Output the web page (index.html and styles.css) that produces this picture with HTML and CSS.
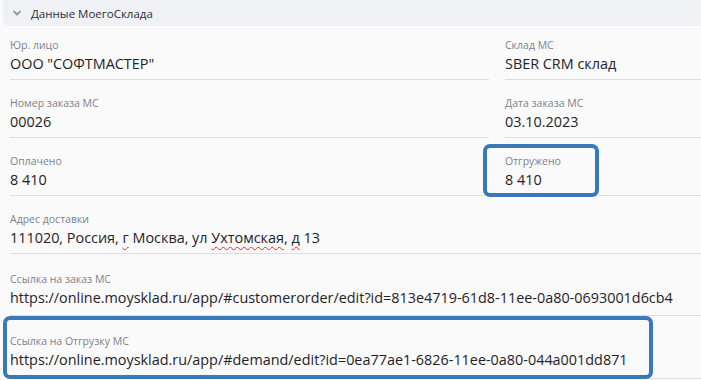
FILE: index.html
```html
<!DOCTYPE html>
<html lang="ru">
  <head>
    <meta charset="UTF-8">
    <title>Данные МоегоСклада</title>
    <link rel="stylesheet" href="styles.css">
  </head>
  <body>
    <div class="section">
      <div class="section-header">
        <svg class="chevron" width="10" height="6" viewBox="0 0 10 6">
          <path d="M1.5 1.2 L5 4.5 L8.5 1.2" fill="none" stroke="#8d929a" stroke-width="1.8"/>
        </svg>
        <span>Данные МоегоСклада</span>
      </div>

      <div class="fields">
        <div class="row first">
          <div class="field">
            <div class="label">Юр. лицо</div>
            <div class="value">ООО "СОФТМАСТЕР"</div>
          </div>
          <div class="field">
            <div class="label">Склад МС</div>
            <div class="value">SBER CRM склад</div>
          </div>
        </div>

        <div class="row">
          <div class="field">
            <div class="label">Номер заказа МС</div>
            <div class="value">00026</div>
          </div>
          <div class="field">
            <div class="label">Дата заказа МС</div>
            <div class="value">03.10.2023</div>
          </div>
        </div>

        <div class="row">
          <div class="field">
            <div class="label">Оплачено</div>
            <div class="value">8 410</div>
          </div>
          <div class="field marked-small">
            <div class="label">Отгружено</div>
            <div class="value">8 410</div>
          </div>
        </div>

        <div class="row wide">
          <div class="field">
            <div class="label">Адрес доставки</div>
            <div class="value">111020, Россия, <span class="typo">г</span> Москва, ул <span class="typo">Ухтомская</span>, <span class="typo">д</span> 13</div>
          </div>
        </div>

        <div class="row wide link">
          <div class="field">
            <div class="label">Ссылка на заказ МС</div>
            <div class="value">https://online.moysklad.ru/app/#customerorder/edit?id=813e4719-61d8-11ee-0a80-0693001d6cb4</div>
          </div>
        </div>

        <div class="row wide link last">
          <div class="field marked-wide">
            <div class="label">Ссылка на Отгрузку МС</div>
            <div class="value">https://online.moysklad.ru/app/#demand/edit?id=0ea77ae1-6826-11ee-0a80-044a001dd871</div>
          </div>
        </div>
      </div>
    </div>
  </body>
</html>
```

FILE: styles.css
```css
body {
  margin: 0;
  background: #fafafa;
  font-family: 'Open Sans', 'Noto Sans', sans-serif;
  color: #1f2328;
}
.section-header {
  display: flex;
  align-items: center;
  gap: 9px;
  height: 26px;
  margin-left: 3px;
  padding-left: 9px;
  background: #eff1f4;
  border-radius: 0 0 0 6px;
  font-size: 11.5px;
  color: #2b2f36;
}
.fields {
  padding-left: 10px;
}
.row {
  display: grid;
  grid-template-columns: 479px 1fr;
  column-gap: 16px;
}
.row.wide {
  grid-template-columns: 1fr;
}
.field {
  position: relative;
  padding: 16px 0 5px;
  border-bottom: 1px solid #dedede;
}
.row.first .field {
  padding-top: 12px;
}
.row.link .field {
  padding-top: 18px;
  padding-bottom: 7px;
}
.row.last .field {
  padding-bottom: 8px;
}
.label {
  font-size: 10.5px;
  line-height: 14px;
  color: #7d828a;
}
.value {
  margin-top: 2px;
  font-size: 14.4px;
  line-height: 20px;
  white-space: nowrap;
}
.typo {
  text-decoration: underline wavy #e0312b;
  text-decoration-thickness: 1px;
  text-underline-offset: 3px;
}
/* blue annotation frames drawn over the fields */
.marked-small::after,
.marked-wide::after {
  content: '';
  position: absolute;
  border: 4px solid #3a78bc;
  border-radius: 7px;
}
.marked-small::after {
  left: -22px;
  top: 6px;
  width: 108px;
  height: 45px;
}
.marked-wide::after {
  left: -7px;
  top: 0;
  width: 642px;
  height: 55px;
}
```
